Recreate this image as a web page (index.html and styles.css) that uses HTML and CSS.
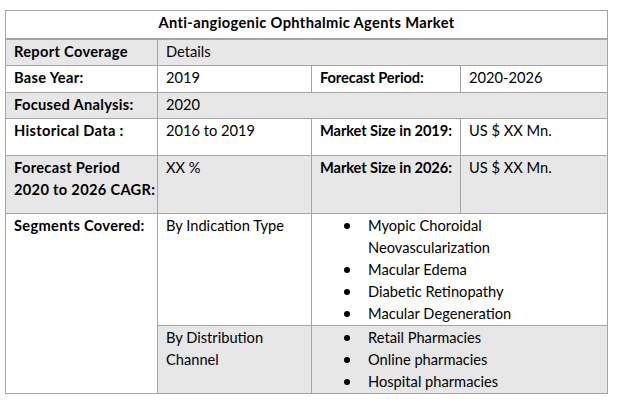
FILE: index.html
```html
<!DOCTYPE html>
<html>
<head>
<meta charset="utf-8">
<link rel="stylesheet" href="styles.css">
</head>
<body>
<table class="report">
  <colgroup>
    <col class="c1"><col class="c2"><col class="c3"><col class="c4">
  </colgroup>
  <tr class="r-title">
    <th colspan="4" class="title">Anti-angiogenic Ophthalmic Agents Market</th>
  </tr>
  <tr class="shade r-27">
    <td class="label">Report Coverage</td>
    <td colspan="3">Details</td>
  </tr>
  <tr class="r-27">
    <td class="label">Base Year:</td>
    <td>2019</td>
    <td class="label tight">Forecast Period:</td>
    <td>2020-2026</td>
  </tr>
  <tr class="shade r-26">
    <td class="label">Focused Analysis:</td>
    <td colspan="3">2020</td>
  </tr>
  <tr class="r-37">
    <td class="label">Historical Data :</td>
    <td>2016 to 2019</td>
    <td class="label tight">Market Size in 2019:</td>
    <td>US $ XX Mn.</td>
  </tr>
  <tr class="shade r-58">
    <td class="label">Forecast Period<br>2020 to 2026 CAGR:</td>
    <td>XX %</td>
    <td class="label tight">Market Size in 2026:</td>
    <td>US $ XX Mn.</td>
  </tr>
  <tr class="r-110">
    <td class="label" rowspan="2">Segments Covered:</td>
    <td>By Indication Type</td>
    <td colspan="2" class="list-cell">
      <ul class="bullets">
        <li>Myopic Choroidal<br>Neovascularization</li>
        <li>Macular Edema</li>
        <li>Diabetic Retinopathy</li>
        <li>Macular Degeneration</li>
      </ul>
    </td>
  </tr>
  <tr class="r-68">
    <td class="shade-cell">By Distribution<br>Channel</td>
    <td colspan="2" class="list-cell shade-cell">
      <ul class="bullets">
        <li>Retail Pharmacies</li>
        <li>Online pharmacies</li>
        <li>Hospital pharmacies</li>
      </ul>
    </td>
  </tr>
</table>
</body>
</html>
```

FILE: styles.css
```css
html, body {
  margin: 0;
  padding: 0;
  background: #ffffff;
}

body {
  font-family: Lato, "Open Sans", sans-serif;
  font-size: 14.67px;
  line-height: 22px;
  color: #000000;
}

.report {
  margin: 10px 0 0 5px;
  width: 602px;
  table-layout: fixed;
  border-collapse: collapse;
  border: 1px solid #a5a5a5;
}

.c1 { width: 152px; }
.c2 { width: 154px; }
.c3 { width: 149px; }
.c4 { width: 147px; }

.report th,
.report td {
  border: 1px solid #a5a5a5;
  padding: 1px 0 0 8px;
  vertical-align: top;
  text-align: left;
  font-weight: normal;
}

.report .title {
  text-align: center;
  font-weight: bold;
  letter-spacing: 0.35px;
  padding: 1px 0 0 0;
  border-bottom: 2px solid #a5a5a5;
}

.r-title { height: 28px; }
.r-27 { height: 27px; }
.r-26 { height: 26px; }
.r-37 { height: 37px; }
.r-58 { height: 58px; }
.r-110 { height: 110px; }
.r-68 { height: 68px; }

.shade td,
.shade-cell {
  background: #e7e7e7;
}

.report .label {
  font-weight: bold;
  letter-spacing: 0.3px;
}

.report .label.tight {
  letter-spacing: -0.1px;
}

.report .list-cell {
  padding-left: 0;
}

.bullets {
  list-style: none;
  margin: 0;
  padding: 0;
}

.bullets li {
  position: relative;
  padding-left: 56px;
}

.bullets li::before {
  content: "";
  position: absolute;
  left: 32px;
  top: 8px;
  width: 6px;
  height: 6px;
  border-radius: 50%;
  background: #000000;
}
```
